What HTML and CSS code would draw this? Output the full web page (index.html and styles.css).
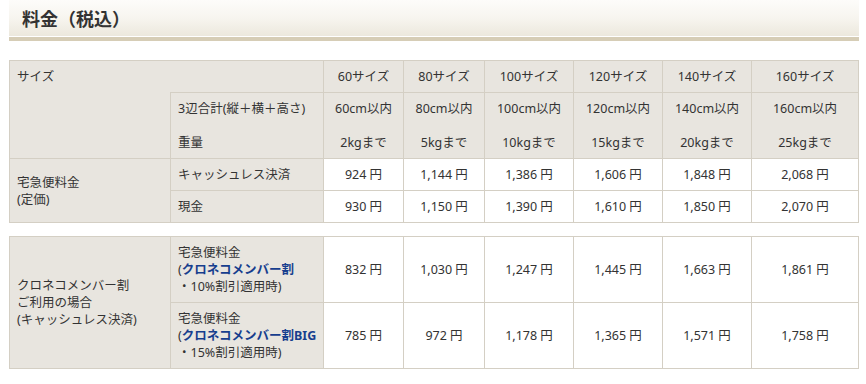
FILE: index.html
```html
<!DOCTYPE html>
<html lang="ja">
<head>
<meta charset="utf-8">
<title>料金（税込）</title>
<link rel="stylesheet" href="styles.css">
</head>
<body>
<div class="wrap">
  <h2 class="heading">料金（税込）</h2>

  <table class="price">
    <colgroup>
      <col class="c1"><col class="c2"><col class="c3"><col class="c4"><col class="c5"><col class="c6"><col class="c7"><col class="c8">
    </colgroup>
    <tr>
      <th colspan="2" class="label top-open">サイズ</th>
      <th>60サイズ</th><th>80サイズ</th><th>100サイズ</th><th>120サイズ</th><th>140サイズ</th><th>160サイズ</th>
    </tr>
    <tr>
      <th class="label bottom-open"></th>
      <th class="label">3辺合計(縦＋横＋高さ)<br><br>重量</th>
      <th>60cm以内<br><br>2kgまで</th>
      <th>80cm以内<br><br>5kgまで</th>
      <th>100cm以内<br><br>10kgまで</th>
      <th>120cm以内<br><br>15kgまで</th>
      <th>140cm以内<br><br>20kgまで</th>
      <th>160cm以内<br><br>25kgまで</th>
    </tr>
    <tr>
      <th rowspan="2" class="label mid">宅急便料金<br>(定価)</th>
      <th class="label">キャッシュレス決済</th>
      <td>924 円</td><td>1,144 円</td><td>1,386 円</td><td>1,606 円</td><td>1,848 円</td><td>2,068 円</td>
    </tr>
    <tr>
      <th class="label">現金</th>
      <td>930 円</td><td>1,150 円</td><td>1,390 円</td><td>1,610 円</td><td>1,850 円</td><td>2,070 円</td>
    </tr>
  </table>

  <table class="price second">
    <colgroup>
      <col class="c1"><col class="c2"><col class="c3"><col class="c4"><col class="c5"><col class="c6"><col class="c7"><col class="c8">
    </colgroup>
    <tr>
      <th rowspan="2" class="label mid">クロネコメンバー割<br>ご利用の場合<br>(キャッシュレス決済)</th>
      <th class="label tight">宅急便料金<br>(<strong class="member">クロネコメンバー割</strong><br>・10%割引適用時)</th>
      <td>832 円</td><td>1,030 円</td><td>1,247 円</td><td>1,445 円</td><td>1,663 円</td><td>1,861 円</td>
    </tr>
    <tr>
      <th class="label tight">宅急便料金<br>(<strong class="member">クロネコメンバー割BIG</strong><br>・15%割引適用時)</th>
      <td>785 円</td><td>972 円</td><td>1,178 円</td><td>1,365 円</td><td>1,571 円</td><td>1,758 円</td>
    </tr>
  </table>
</div>
</body>
</html>
```

FILE: styles.css
```css
html, body {
  margin: 0;
  padding: 0;
  background: #fff;
}

body {
  font-family: "Noto Sans", "Noto Sans CJK JP", sans-serif;
  color: #333;
  font-size: 12.5px;
  line-height: 17px;
}

.wrap {
  width: 850px;
  margin-left: 9px;
}

.heading {
  margin: 0;
  height: 36px;
  padding-left: 13px;
  font-family: "Noto Sans CJK JP", sans-serif;
  font-size: 18px;
  line-height: 36px;
  font-weight: bold;
  color: #333;
  background: linear-gradient(to bottom, #fdfcfa 0%, #f7f5ef 50%, #ece8dd 100%);
  border-bottom: 1px solid #ffffff;
  box-shadow: 0 4px 0 #d6cdb6;
}

.price {
  width: 850px;
  table-layout: fixed;
  border-collapse: collapse;
  margin-top: 23px;
}

.price.second {
  margin-top: 13px;
}

.c1 { width: 161px; }
.c2 { width: 153px; }
.c3 { width: 80px; }
.c4 { width: 81px; }
.c5 { width: 89px; }
.c6 { width: 89px; }
.c7 { width: 89px; }
.c8 { width: 107px; }

.price th,
.price td {
  border: 1px solid #d4cfc4;
  padding: 7px 7px;
  font-weight: normal;
  text-align: center;
  vertical-align: middle;
}

.price th {
  background: #e8e5df;
}

.price td {
  background: #fff;
}

.price th.label {
  text-align: left;
  vertical-align: top;
}

.price th.label.mid {
  vertical-align: middle;
}

.price th.label.tight {
  padding-right: 2px;
  white-space: nowrap;
}

.price th.top-open {
  border-bottom: none;
}

.price th.bottom-open {
  border-top: none;
}

.member {
  color: #173e8e;
  font-weight: bold;
}
```
